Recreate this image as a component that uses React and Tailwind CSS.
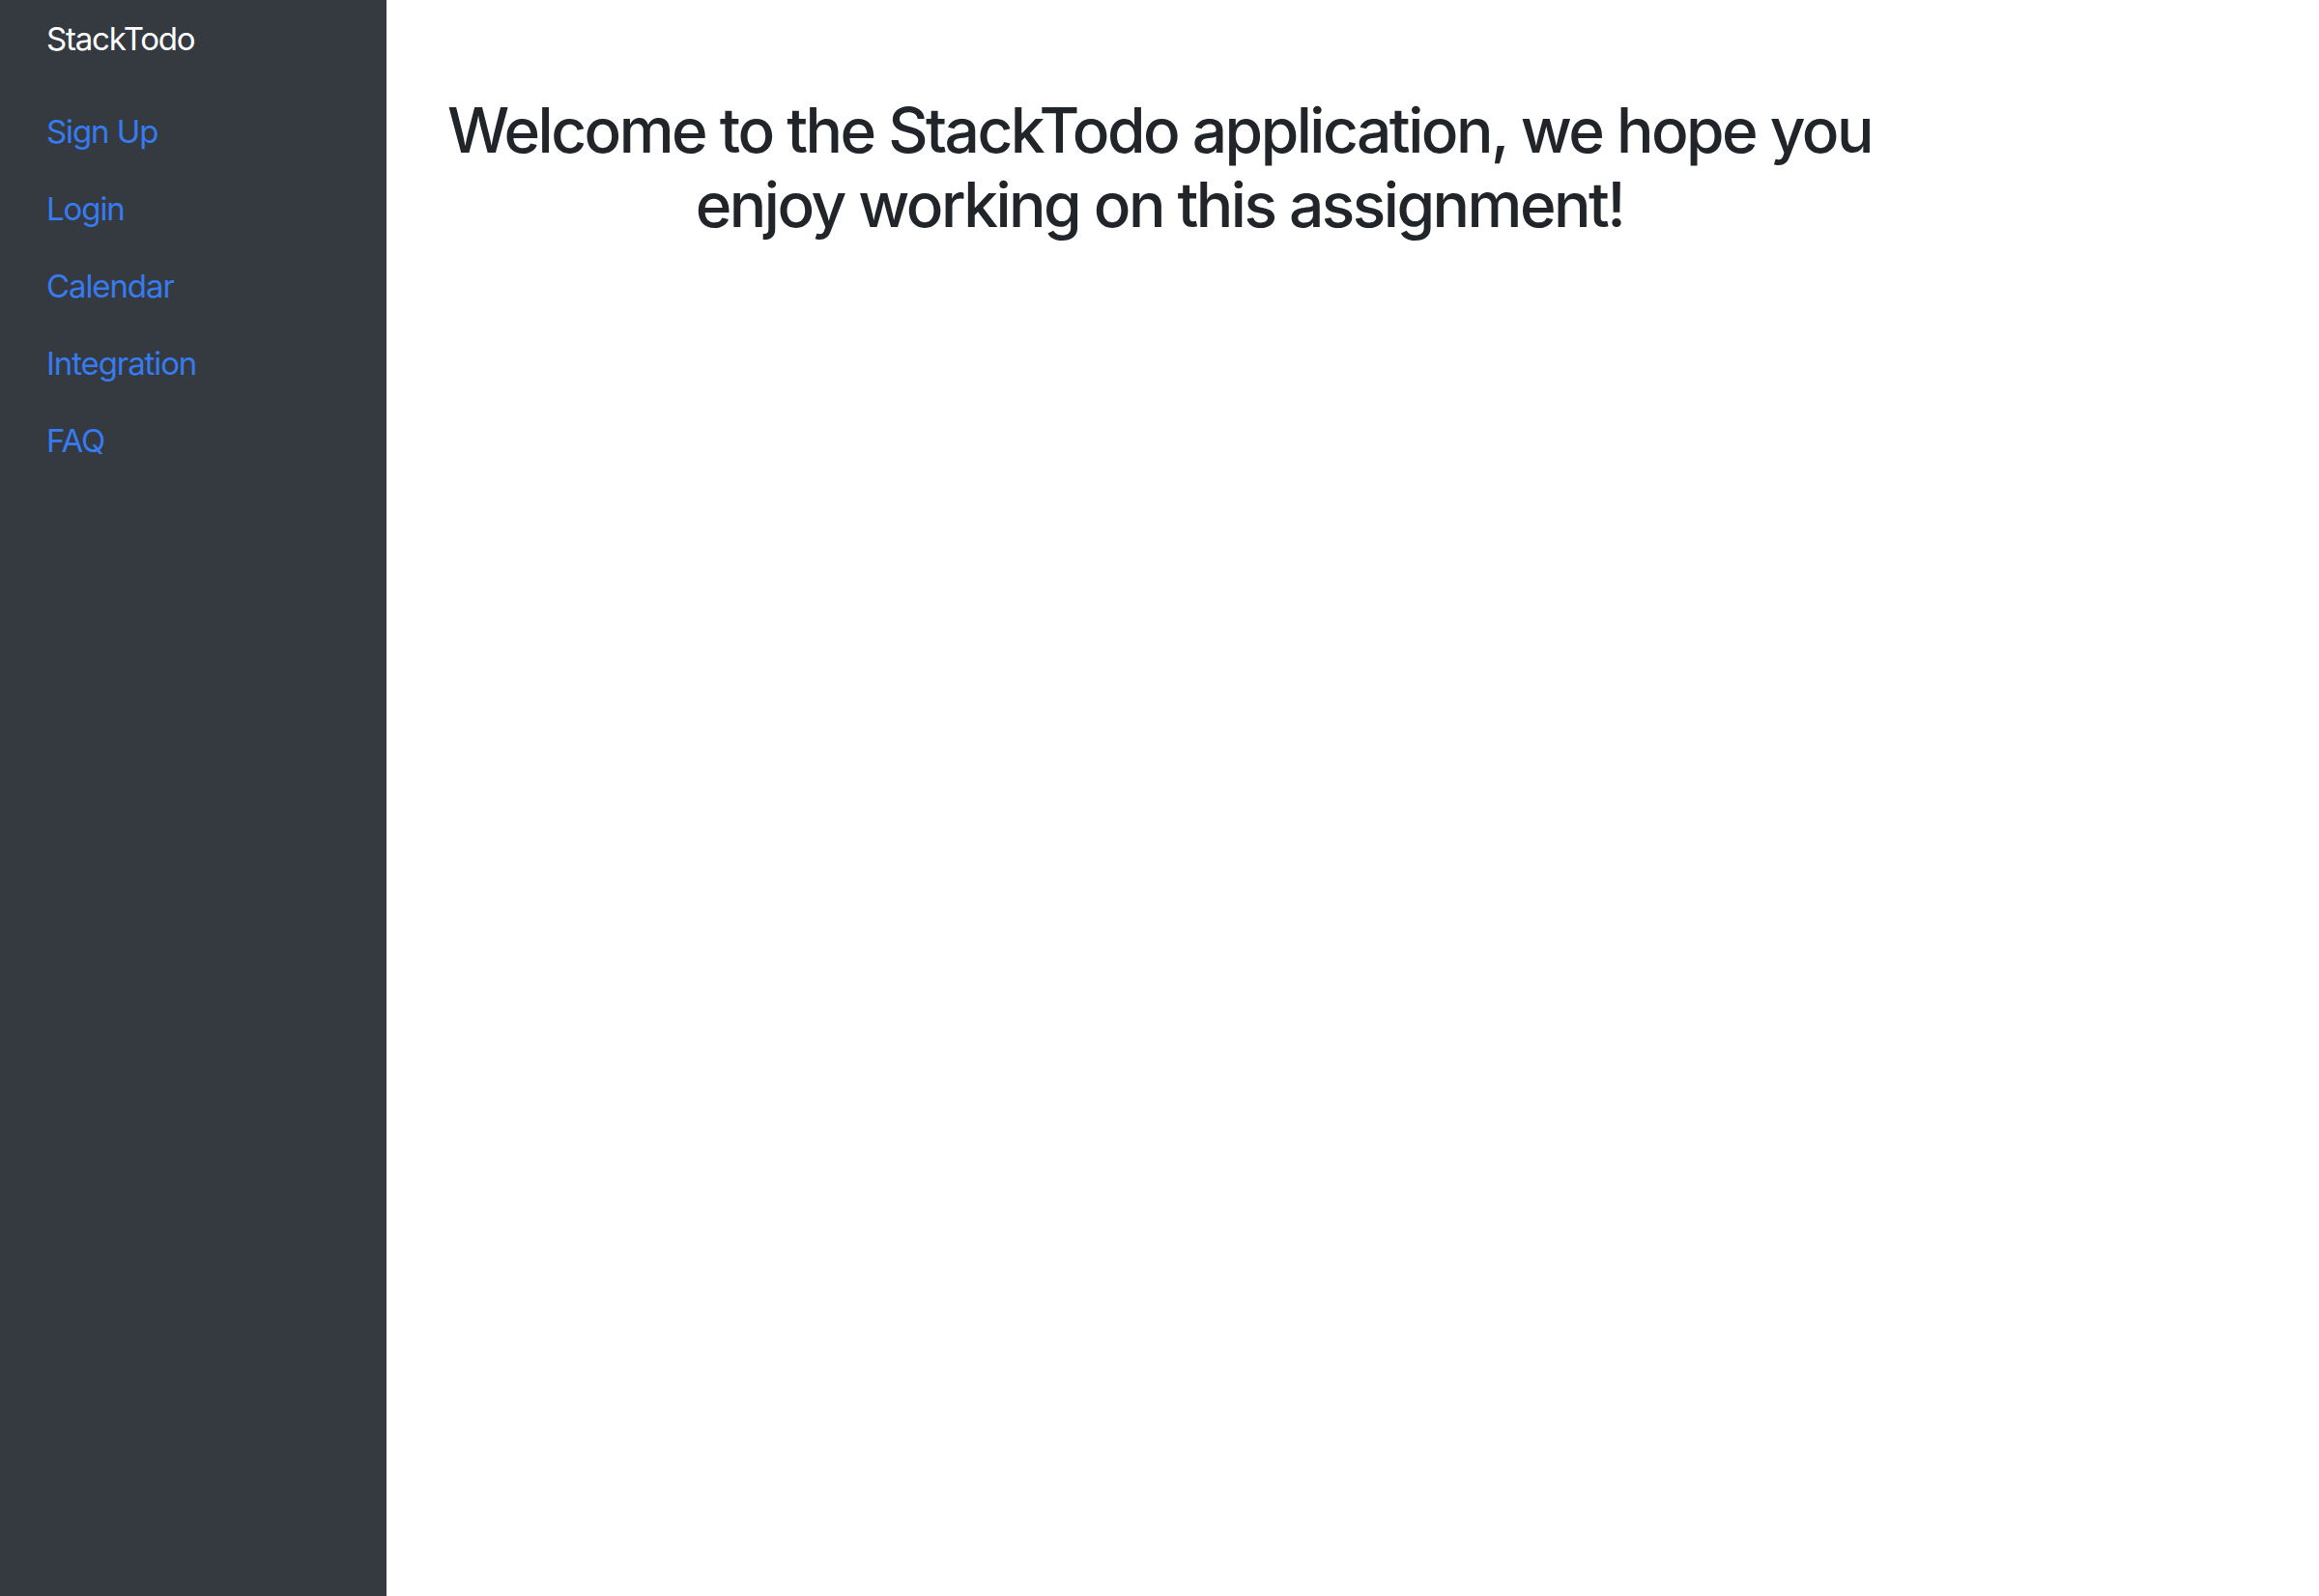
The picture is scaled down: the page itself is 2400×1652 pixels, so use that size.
const links = ["Sign Up", "Login", "Calendar", "Integration", "FAQ"];

export default function App() {
  return (
    <div
      className="flex min-h-screen bg-white"
      style={{ fontFamily: "Inter, 'Noto Sans', sans-serif" }}
    >
      <aside className="w-[400px] shrink-0 bg-[#343a40] pl-[48px] pt-[16px]">
        <div className="text-[33px] leading-[48px] text-white tracking-[-1.2px]">StackTodo</div>
        <nav className="mt-[32px] flex flex-col">
          {links.map((l) => (
            <a
              key={l}
              href="#"
              className="text-[33px] leading-[80px] text-[#377bf0] tracking-[-1.1px]"
            >
              {l}
            </a>
          ))}
        </nav>
      </aside>
      <main className="flex-1">
        <div className="w-[1600px] px-[20px] pt-[96px]">
          <h1 className="text-center text-[64px] font-medium leading-[77px] text-[#212529] tracking-[-2.5px]">
            Welcome to the StackTodo application, we hope you enjoy working on this assignment!
          </h1>
        </div>
      </main>
    </div>
  );
}
